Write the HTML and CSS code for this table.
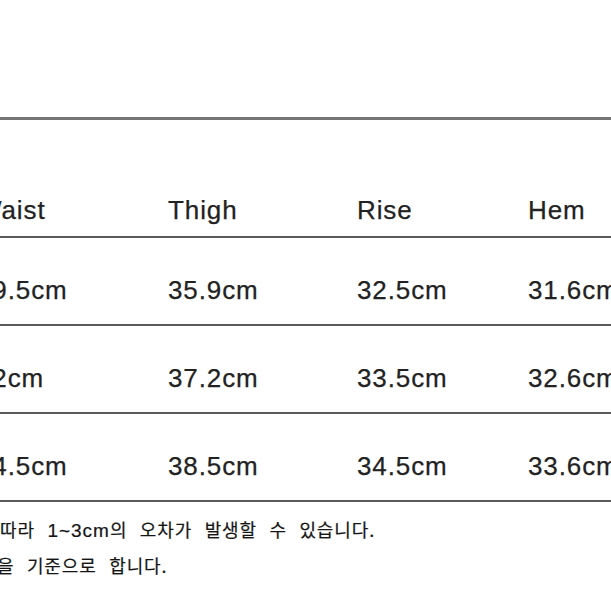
FILE: index.html
```html
<!DOCTYPE html>
<html lang="ko">
<head>
<meta charset="utf-8">
<title>Size chart</title>
<link rel="stylesheet" href="styles.css">
</head>
<body>
<main class="sheet">
  <div class="table">
    <div class="row head">
      <div class="cell">Waist</div>
      <div class="cell">Thigh</div>
      <div class="cell">Rise</div>
      <div class="cell">Hem</div>
    </div>
    <div class="row">
      <div class="cell">39.5cm</div>
      <div class="cell">35.9cm</div>
      <div class="cell">32.5cm</div>
      <div class="cell">31.6cm</div>
    </div>
    <div class="row">
      <div class="cell">42cm</div>
      <div class="cell">37.2cm</div>
      <div class="cell">33.5cm</div>
      <div class="cell">32.6cm</div>
    </div>
    <div class="row">
      <div class="cell">44.5cm</div>
      <div class="cell">38.5cm</div>
      <div class="cell">34.5cm</div>
      <div class="cell">33.6cm</div>
    </div>
  </div>
  <div class="notes">
    <p class="note note-1"><span class="lead">측정 방법에 </span><span>따라 <span class="range">1~3cm</span>의 오차가 발생할 수 있습니다.</span></p>
    <p class="note note-2"><span class="lead">모든 사이즈는 단면</span><span>을 기준으로 합니다.</span></p>
  </div>
</main>
</body>
</html>
```
FILE: styles.css
```css
html, body {
  margin: 0;
  padding: 0;
  background: #ffffff;
}

body {
  width: 611px;
  overflow: hidden;
}

.sheet {
  padding-top: 117px;
}

.table {
  border-top: 3px solid #767676;
}

.row {
  display: grid;
  grid-template-columns: 191px 189px 171px 200px;
  align-items: end;
  height: 86px;
  box-sizing: content-box;
  margin-left: -23px;
  padding-right: 23px;
  border-bottom: 2px solid #5a5a5a;
  font-family: "Liberation Sans", Arial, sans-serif;
  font-size: 26px;
  letter-spacing: 0.9px;
  line-height: 30px;
  color: #222222;
}

.row .cell {
  padding-bottom: 19px;
  white-space: nowrap;
  -webkit-text-stroke: 0.25px #222222;
}

.row.head {
  height: 116px;
}

.row.head .cell {
  padding-bottom: 11px;
}

.notes {
  padding-top: 10px;
  font-family: "Noto Sans CJK KR", "Noto Sans", sans-serif;
  font-size: 18px;
  letter-spacing: 0.9px;
  word-spacing: 6.5px;
  line-height: 35px;
  color: #151515;
  -webkit-text-stroke: 0.2px #151515;
}

.note {
  margin: 0;
  display: flex;
  white-space: pre;
}

.note .lead {
  flex: 0 0 0;
  width: 0;
  display: flex;
  justify-content: flex-end;
}

.range {
  font-family: "Liberation Sans", Arial, sans-serif;
  font-size: 19px;
  letter-spacing: 1px;
}

.note-2 {
  margin-left: -3px;
}
```
